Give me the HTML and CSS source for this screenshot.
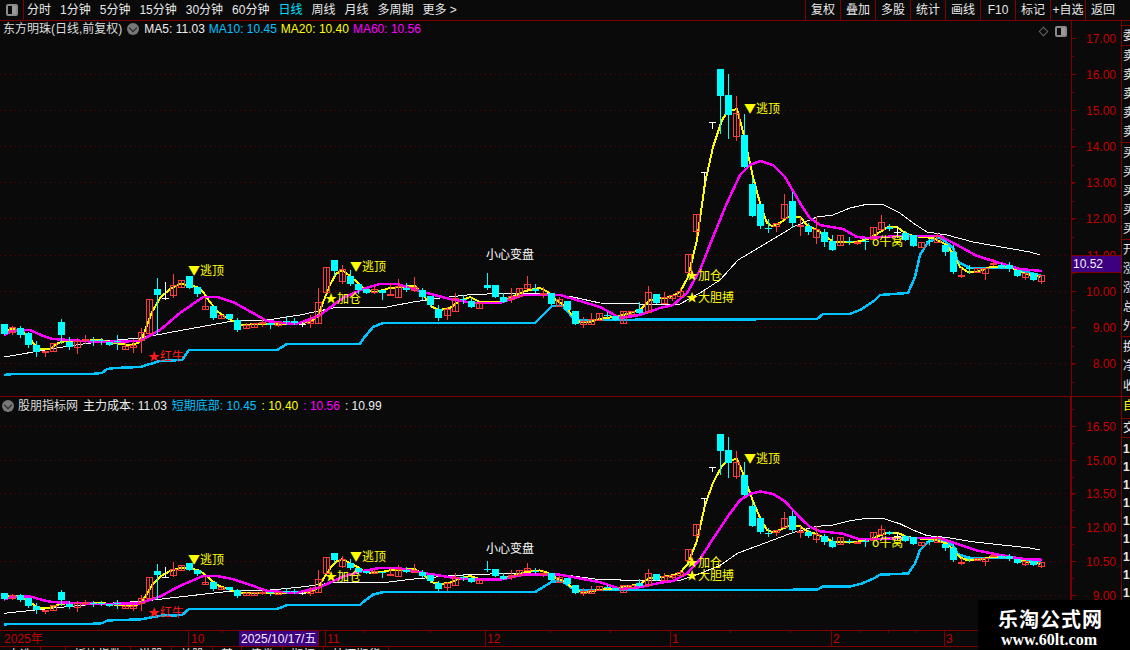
FILE: index.html
```html
<!DOCTYPE html>
<html lang="zh-CN">
<head>
<meta charset="utf-8">
<title>东方明珠 日线</title>
<link rel="stylesheet" href="styles.css">
</head>
<body>
<div class="app">
  <header class="toolbar">
    <div class="toggle-cell"><span class="toggle"></span></div>
    <nav class="periods">
      <span>分时</span><span>1分钟</span><span>5分钟</span><span>15分钟</span><span>30分钟</span><span>60分钟</span>
      <span class="active">日线</span><span>周线</span><span>月线</span><span>多周期</span><span>更多 &gt;</span>
    </nav>
    <div class="actions">
      <span>复权</span><span>叠加</span><span>多股</span><span>统计</span><span>画线</span><span>F10</span><span>标记</span><span>+自选</span><span>返回</span>
    </div>
  </header>

  <section class="panel panel-upper">
    <div class="plot-wrap">
      <svg id="plotU" class="plot" width="1070" height="375" viewBox="0 21 1070 375"></svg>
      <div class="title title-upper">
        <span class="name">东方明珠(日线,前复权)</span>
        <span class="chev"></span>
        <span class="white">MA5: 11.03</span>
        <span class="cyan">MA10: 10.45</span>
        <span class="yellow">MA20: 10.40</span>
        <span class="magenta">MA60: 10.56</span>
      </div>
      <div class="corner"><span class="diamond"></span><span class="toggle small"></span></div>
    </div>
    <svg id="axisU" class="axis" width="51" height="375" viewBox="1070 21 51 375"></svg>
    <aside class="side">
      <div class="gap5"></div>
      <div class="cell c20"><span>委</span></div>
      <div class="cell c97"><span>卖</span><span>卖</span><span>卖</span><span>卖</span><span>卖</span></div>
      <div class="cell c97"><span>买</span><span>买</span><span>买</span><span>买</span><span>买</span></div>
      <div class="cell c97"><span>开</span><span>涨</span><span>涨</span><span>总</span><span>外</span></div>
      <div class="cell c60"><span>换</span><span>净</span><span>收</span></div>
    </aside>
  </section>

  <section class="panel panel-lower">
    <div class="plot-wrap">
      <svg id="plotL" class="plot" width="1070" height="233" viewBox="0 397 1070 233"></svg>
      <div class="title title-lower">
        <span class="chev"></span>
        <span class="name">股朋指标网</span>
        <span class="white">主力成本: 11.03</span>
        <span class="cyan">短期底部: 10.45</span>
        <span class="yellow">: 10.40</span>
        <span class="magenta">: 10.56</span>
        <span class="white">: 10.99</span>
      </div>
    </div>
    <svg id="axisL" class="axis" width="51" height="233" viewBox="1070 397 51 233"></svg>
    <aside class="side">
      <div class="cell c18 gold"><span>自</span></div>
      <div class="cell c20 mt"><span>交</span></div>
      <div class="digits"><span>1</span><span>1</span><span>1</span><span>1</span><span>1</span><span>1</span><span>1</span><span>1</span><span>1</span></div>
    </aside>
  </section>

  <section class="timebar">
    <svg class="times" width="1130" height="15" viewBox="0 631 1130 15">
      <text class="t-red" x="4" y="643">2025年</text>
      <line class="t-sep" x1="188.5" y1="631" x2="188.5" y2="646"/>
      <text class="t-red" x="191" y="643">10</text>
      <line class="t-tick" x1="222.5" y1="631" x2="222.5" y2="633"/>
      <rect class="t-date-bg" x="239" y="631" width="79" height="15"/>
      <text class="t-date" x="241" y="643">2025/10/17/五</text>
      <line class="t-sep" x1="318.5" y1="631" x2="318.5" y2="646"/>
      <line class="t-sep" x1="325.5" y1="631" x2="325.5" y2="646"/>
      <text class="t-red" x="327" y="643">11</text>
      <line class="t-tick" x1="364.5" y1="631" x2="364.5" y2="633"/>
      <line class="t-tick" x1="430.5" y1="631" x2="430.5" y2="633"/>
      <line class="t-sep" x1="485.5" y1="631" x2="485.5" y2="646"/>
      <text class="t-red" x="487" y="643">12</text>
      <line class="t-tick" x1="550.5" y1="631" x2="550.5" y2="633"/>
      <line class="t-tick" x1="610.5" y1="631" x2="610.5" y2="633"/>
      <line class="t-sep" x1="670.5" y1="631" x2="670.5" y2="646"/>
      <text class="t-red" x="672" y="643">1</text>
      <line class="t-tick" x1="730.5" y1="631" x2="730.5" y2="633"/>
      <line class="t-tick" x1="790.5" y1="631" x2="790.5" y2="633"/>
      <line class="t-sep" x1="831.5" y1="631" x2="831.5" y2="646"/>
      <text class="t-red" x="833" y="643">2</text>
      <line class="t-tick" x1="859.5" y1="631" x2="859.5" y2="633"/>
      <line class="t-tick" x1="888.5" y1="631" x2="888.5" y2="633"/>
      <line class="t-tick" x1="916.5" y1="631" x2="916.5" y2="633"/>
      <line class="t-sep" x1="944.5" y1="631" x2="944.5" y2="646"/>
      <text class="t-red" x="946" y="643">3</text>
      <line class="t-sep" x1="1070.5" y1="631" x2="1070.5" y2="646"/>
    </svg>
  </section>

  <footer class="tabs">
    <span>自选</span><span>A</span><span>板块指数</span><span>港股</span><span>美股</span><span>基</span><span>债券</span><span>期权</span><span>外汇期货</span>
  </footer>

  <div class="watermark">
    <div class="wm-cn">乐淘公式网</div>
    <div class="wm-en">www.60lt.com</div>
  </div>
</div>
<script src="chart.js"></script>
</body>
</html>
```
FILE: styles.css
```css
* { box-sizing: border-box; }
html, body { margin: 0; padding: 0; background: #0a0a0a; }
body {
  width: 1130px;
  height: 650px;
  overflow: hidden;
  font-family: "Liberation Sans", "Noto Sans CJK SC", sans-serif;
  font-size: 12px;
  color: #e8e8e8;
}
.app { position: relative; width: 1130px; height: 650px; display: flex; flex-direction: column; }

/* toolbar */
.toolbar { height: 21px; flex: none; display: flex; border-bottom: 1px solid #800000; line-height: 20px; }
.toggle-cell { width: 24px; flex: none; border-right: 1px solid #800000; display: flex; align-items: center; justify-content: center; }
.toggle { display: block; width: 12px; height: 12px; border: 2px solid #8a8a8a; border-radius: 2px; background: linear-gradient(90deg, #0a0a0a 50%, #9a9a9a 50%); }
.toggle.small { width: 12px; height: 11px; }
.periods { display: flex; gap: 9px; padding-left: 3px; flex: 1; white-space: nowrap; }
.active { color: #00e0ff; }
.actions { display: flex; flex: none; width: 325px; }
.actions span { width: 35px; text-align: center; border-left: 1px solid #800000; }
.actions span:last-child { width: 45px; padding-right: 10px; }

/* panels */
.panel { display: flex; flex: none; border-bottom: 1px solid #800000; }
.panel-upper { height: 376px; }
.panel-lower { height: 234px; }
.plot-wrap { position: relative; width: 1070px; flex: none; height: 100%; }
.plot, .axis, .times { display: block; flex: none; }
.axis { width: 51px; }

.title { position: absolute; display: flex; white-space: nowrap; align-items: center; line-height: 16px; }
.title-upper { left: 3px; top: 0; height: 16px; }
.title-upper .chev { margin: 0 5px 0 5px; }
.title-upper span + span + span { margin-right: 4px; }
.title-lower { left: 2px; top: 0; height: 17px; }
.title-lower .chev { margin-right: 4px; }
.title-lower span { margin-right: 5px; }
.chev { position: relative; display: block; width: 12px; height: 12px; border-radius: 50%; background: #777; flex: none; }
.chev::after {
  content: "";
  position: absolute;
  left: 3px;
  top: 2px;
  width: 5px;
  height: 5px;
  border-right: 1.5px solid #222;
  border-bottom: 1.5px solid #222;
  transform: rotate(45deg);
}
.white { color: #eee; }
.name { color: #ddd; }
.cyan { color: #00c4ff; }
.yellow { color: #ffff00; }
.magenta { color: #ff00ff; }

.corner { position: absolute; right: 3px; top: 5px; display: flex; align-items: center; gap: 8px; }
.diamond { display: block; width: 7px; height: 7px; border: 1px solid #666; transform: rotate(45deg); }

/* clipped side column */
.side { width: 9px; flex: none; overflow: hidden; border-left: 1px solid #800000; display: flex; flex-direction: column; line-height: 14px; }
.gap5 { height: 4px; flex: none; }
.cell { display: flex; flex-direction: column; justify-content: space-around; border-top: 1px solid #800000; flex: none; overflow: hidden; padding-left: 1px; white-space: nowrap; }
.c18 { height: 18px; }
.c20 { height: 20px; }
.c97 { height: 97px; }
.c60 { height: 60px; flex: 1; }
.mt { margin-top: 3px; border-bottom: 1px solid #800000; }
.gold { color: #ffff00; border-top: none; }
.digits { display: flex; flex-direction: column; gap: 4px; padding: 4px 0 0 1px; }
.digits span { display: block; font-weight: bold; }

/* svg classes */
.dots { stroke: #6a0000; stroke-width: 1; stroke-dasharray: 1 4; fill: none; }
.ln { fill: none; shape-rendering: crispEdges; stroke-linejoin: round; }
.ln-white { stroke: #ffffff; stroke-width: 1; }
.ln-cyan { stroke: #00c4ff; stroke-width: 2.5; }
.ln-yellow { stroke: #ffff00; stroke-width: 2; }
.ln-magenta { stroke: #ff00ff; stroke-width: 2.5; }
.cd { shape-rendering: crispEdges; }
.cd-c { fill: #00ffff; }
.cw-c { stroke: #00ffff; }
.cd-r { fill: none; stroke: #ff3b3b; }
.cd-f { fill: #ff3b3b; }
.cw-r { stroke: #ff3b3b; }
.cd-w { fill: #ffffff; }
.cw-w { stroke: #ffffff; }
.lab { font-family: "Noto Sans CJK SC", sans-serif; font-size: 12px; }
.lab-y { fill: #ffff00; }
.lab-w { fill: #ffffff; }
.lab-r { fill: #ff1a1a; }

.ax-line { stroke: #800000; shape-rendering: crispEdges; }
.ax-tick { stroke: #800000; stroke-width: 1; shape-rendering: crispEdges; }
.ax-text { fill: #c40000; font-family: "Liberation Sans", sans-serif; font-size: 12px; text-anchor: end; }
.tag-bg { fill: #3d0080; stroke: #800000; stroke-width: 1; shape-rendering: crispEdges; }
.tag-text { fill: #f0f0ff; font-family: "Liberation Sans", sans-serif; font-size: 12px; }
#axisU .ax-line { stroke-width: 1; }
#axisL .ax-line { stroke-width: 2; }

/* time axis */
.timebar { height: 16px; flex: none; border-bottom: 1px solid #800000; }
.t-red { fill: #c40000; font-family: "Liberation Sans", "Noto Sans CJK SC", sans-serif; font-size: 12px; }
.t-sep { stroke: #800000; stroke-width: 1; shape-rendering: crispEdges; }
.t-tick { stroke: #800000; stroke-width: 1; shape-rendering: crispEdges; }
.t-date-bg { fill: #3d0080; }
.t-date { fill: #f0f0ff; font-family: "Liberation Sans", "Noto Sans CJK SC", sans-serif; font-size: 12px; }

/* bottom tabs, only their top edge is on screen */
.tabs { height: 3px; flex: none; display: flex; overflow: hidden; line-height: 16px; }
.tabs span { padding: 0 8px; border-right: 1px solid #800000; white-space: nowrap; }

/* watermark */
.watermark { position: absolute; left: 978px; top: 600px; width: 152px; height: 50px; background: #000; color: #fff; text-align: center; padding-top: 7px; }
.wm-cn { font-family: "Noto Sans CJK SC", sans-serif; font-weight: bold; font-size: 20px; line-height: 24px; letter-spacing: 1px; padding-right: 7px; }
.wm-en { font-family: "Liberation Serif", serif; font-weight: bold; font-size: 16px; line-height: 18px; padding-right: 10px; }
```
FILE: chart.js
```js
var NS = "http://www.w3.org/2000/svg";
var C = "c", R = "r", F = "f", W = "w";
var candles = [
[C,324,334,324,334],[R,327,332,326,334],[C,328,335,326,337],[C,333,345,332,347],[C,345,352,341,356],
[F,351,353,351,356],[R,343,351,343,351],[C,322,335,319,343],[C,342,347,337,349],[R,341,347,338,353],
[F,339,341,335,343],[C,340,341,337,345],[C,340,341,338,344],[C,342,345,342,345],[C,341,342,335,349],
[R,346,349,343,349],[R,345,347,339,352],[R,332,340,328,352],[R,299,333,299,333],[C,289,295,278,333],
[W,298,299,282,299],[R,285,295,274,297],[R,280,287,280,287],[C,276,288,276,288],[C,287,294,287,296],
[R,306,309,297,309],[C,306,318,306,319],[R,315,318,315,318],[C,314,319,314,319],[C,320,330,318,331],
[R,325,328,323,328],[R,323,327,323,327],[F,322,323,318,326],[C,323,325,323,328],[R,322,325,322,326],
[C,321,321,316,324],[C,321,323,318,324],[W,324,324,322,326],[R,321,323,315,327],[R,302,323,288,323],
[R,267,292,267,292],[C,260,271,260,275],[R,269,281,265,283],[C,276,284,270,285],[C,284,290,284,293],
[C,289,293,289,293],[R,289,292,286,293],[C,290,293,290,299],[F,294,295,283,295],[R,286,297,279,297],
[C,288,290,283,291],[R,287,290,277,291],[C,290,297,288,299],[C,296,305,296,306],[C,309,318,305,320],
[R,309,315,307,319],[R,298,311,293,311],[C,299,300,295,303],[C,301,307,298,307],[R,303,308,303,308],
[C,285,288,273,289],[C,285,297,285,297],[C,297,302,293,302],[R,296,299,288,302],[R,288,296,288,296],
[R,284,288,276,288],[C,289,291,284,292],[F,293,295,287,297],[C,293,304,293,304],[R,299,306,297,306],
[C,301,310,301,310],[C,311,324,311,324],[R,321,324,317,327],[R,319,324,313,324],[R,313,320,313,320],
[C,315,316,312,317],[C,316,320,316,320],[R,311,323,311,323],[R,311,314,311,314],[C,309,313,302,313],
[R,292,312,286,312],[C,294,303,294,303],[R,297,303,292,303],[R,295,298,295,300],[R,291,296,288,296],
[R,254,272,254,272],[R,214,231,214,236],[W,172,172,172,182],[W,122,122,122,128],[C,69,96,69,133],
[C,95,115,74,138],[R,113,136,96,140],[C,135,167,114,167],[C,184,216,178,216],[C,204,226,204,228],
[C,228,229,219,232],[R,223,226,223,231],[R,204,218,194,218],[C,201,223,192,227],[F,225,226,217,235],
[C,226,232,223,234],[R,229,237,217,243],[C,232,242,229,246],[C,241,250,235,250],[R,235,245,235,245],
[C,241,241,237,244],[F,242,244,240,244],[C,241,242,238,249],[R,227,239,227,239],[R,222,229,215,229],
[C,227,229,224,230],[W,232,232,227,237],[C,233,240,231,240],[C,235,246,235,246],[R,242,247,242,247],
[C,241,242,239,245],[R,236,242,233,242],[C,245,252,245,255],[C,252,272,245,273],[F,275,277,268,277],
[C,268,269,265,273],[R,268,272,268,272],[R,268,273,268,279],[F,263,265,259,265],[C,265,268,263,268],
[C,265,269,262,271],[C,270,276,270,276],[R,273,277,273,279],[C,273,280,273,280],[R,275,281,275,283]
];
var lines = {
  white: [[4,357],[57,348],[83,344],[117,340],[140,338],[167,333],[200,327],[233,321],[267,320],[300,315],[333,308],[363,307],[387,307],[413,302],[440,298],[467,295],[507,293],[540,293],[573,297],[600,303],[640,304],[680,304],[700,293],[720,280],[738,260],[760,247],[793,227],[817,217],[833,215],[850,208],[868,204],[882,204],[900,213],[913,223],[927,232],[947,235],[973,242],[1007,248],[1030,252],[1040,255]],
  cyan: [[4,375],[13,374],[92,374],[102,373],[107,369],[115,368],[140,367],[150,364],[160,361],[182,360],[189,350],[277,350],[287,344],[360,344],[363,339],[373,327],[383,323],[535,323],[552,306],[563,306],[575,320],[817,319],[823,314],[850,314],[862,309],[875,300],[880,295],[908,293],[915,277],[920,255],[928,242],[940,237],[953,248],[958,262],[970,268],[1013,268],[1042,276]],
  yellow: [[2,331],[12,329],[20,330],[28,336],[34,344],[40,349],[50,349],[58,343],[66,341],[80,341],[100,340],[120,344],[130,345],[138,343],[143,336],[147,325],[152,312],[160,298],[170,289],[180,284],[190,285],[197,287],[203,292],[210,302],[218,312],[226,317],[240,325],[260,324],[290,324],[310,322],[318,316],[324,300],[330,285],[336,274],[342,270],[350,276],[358,283],[366,291],[376,292],[390,288],[400,287],[415,286],[424,296],[432,307],[440,310],[450,308],[458,302],[470,297],[480,302],[500,302],[510,298],[525,291],[540,288],[548,292],[556,300],[564,305],[572,315],[580,322],[590,322],[600,319],[620,316],[640,310],[650,300],[670,297],[680,292],[688,277],[697,240],[705,183],[713,147],[722,120],[728,111],[737,109],[743,132],[753,177],[760,203],[767,223],[772,226],[780,223],[788,217],[800,217],[807,225],[817,230],[827,237],[833,242],[857,242],[870,238],[880,232],[888,227],[897,227],[905,233],[913,236],[933,238],[947,245],[955,257],[960,267],[968,272],[977,272],[990,267],[1010,267],[1023,273],[1040,277]],
  magenta: [[4,335],[12,331],[30,330],[43,336],[53,339],[100,342],[140,341],[160,330],[180,313],[203,297],[217,297],[233,302],[253,313],[267,321],[293,324],[300,323],[320,315],[343,298],[363,289],[380,284],[397,284],[423,292],[450,299],[473,303],[500,303],[523,295],[560,295],[600,307],[620,318],[640,315],[660,308],[673,305],[687,293],[700,270],[713,237],[727,203],[740,175],[750,165],[760,161],[773,165],[785,177],[800,203],[810,218],[820,225],[843,229],[857,237],[867,238],[900,236],[940,236],[957,245],[977,256],[1000,263],[1020,269],[1042,271]]
};
// label: text, x, centre y in the upper pane, centre y in the lower pane, colour class
var labels = [
  ["▼逃顶",188,271,560,"y"],["▼逃顶",350,267,557,"y"],["★加仓",325,299,577,"y"],
  ["小心变盘",486,255,549,"w"],["★加仓",686,276,563,"y"],["★大胆搏",686,298,576,"y"],
  ["▼逃顶",744,109,459,"y"],["★红牛",148,357,613,"r"],["o牛窝",872,242,543,"y"]
];

function el(name, attrs, parent, text) {
  var n = document.createElementNS(NS, name);
  for (var k in attrs) n.setAttribute(k, attrs[k]);
  if (text) n.textContent = text;
  parent.appendChild(n);
  return n;
}

function drawPlot(svg, map, gridYs, which) {
  gridYs.forEach(function (y) {
    el("line", {"class": "dots", x1: 0, x2: 1070, y1: y + 0.5, y2: y + 0.5}, svg);
  });
  ["white", "cyan", "yellow", "magenta"].forEach(function (k) {
    var pts = lines[k].map(function (p) { return p[0] + "," + map(p[1]).toFixed(1); }).join(" ");
    el("polyline", {"class": "ln ln-" + k, points: pts}, svg);
  });
  candles.forEach(function (c, i) {
    var x = Math.round(4.33 + 8.04 * i), t = c[0];
    var top = Math.round(map(c[1])), bot = Math.round(map(c[2]));
    var wt = Math.round(map(c[3])), wb = Math.round(map(c[4]));
    var wcls = t === F ? "r" : t;
    if (wb > wt) el("line", {"class": "cd cw-" + wcls, x1: x + 0.5, x2: x + 0.5, y1: wt, y2: wb + 1}, svg);
    if (t === R) {
      el("rect", {"class": "cd cd-r", x: x - 3 + 0.5, y: top + 0.5, width: 6, height: Math.max(bot - top, 2)}, svg);
    } else {
      el("rect", {"class": "cd cd-" + t, x: x - 3, y: top, width: 7, height: Math.max(bot - top, t === F ? 2 : 1)}, svg);
    }
  });
  labels.forEach(function (l) {
    el("text", {"class": "lab lab-" + l[4], x: l[1], y: l[which] + 4}, svg, l[0]);
  });
}

function drawAxis(svg, top, bottom, marks, step) {
  el("line", {"class": "ax-line", x1: 1071, x2: 1071, y1: top, y2: bottom}, svg);
  for (var y = marks[0][1] % step; y < bottom; y += step) {
    if (y < top) continue;
    el("line", {"class": "ax-tick", x1: 1071, x2: 1074, y1: Math.round(y) + 0.5, y2: Math.round(y) + 0.5}, svg);
  }
  marks.forEach(function (m) {
    el("line", {"class": "ax-tick", x1: 1071, x2: 1076, y1: m[1] + 0.5, y2: m[1] + 0.5}, svg);
    el("text", {"class": "ax-text", x: 1116, y: m[1] + 5}, svg, m[0]);
  });
}

var gridU = [74, 110, 146, 182, 218, 255, 291, 327, 363];
var gridL = [426, 460, 493, 527, 561, 595];
drawPlot(document.getElementById("plotU"), function (y) { return y; }, gridU, 2);
drawPlot(document.getElementById("plotL"), function (y) { return 391.4 + 0.6215 * y; }, gridL, 3);

var axisU = document.getElementById("axisU");
drawAxis(axisU, 21, 396, [["17.00",38],["16.00",74],["15.00",110],["14.00",146],["13.00",182],["12.00",218],["11.00",255],["10.00",291],["9.00",327],["8.00",363]], 18.1);
el("rect", {"class": "tag-bg", x: 1071.5, y: 255.5, width: 50, height: 17}, axisU);
el("text", {"class": "tag-text", x: 1073, y: 268}, axisU, "10.52");
drawAxis(document.getElementById("axisL"), 397, 630, [["16.50",426],["15.00",460],["13.50",493],["12.00",527],["10.50",561],["9.00",595]], 16.9);
```
